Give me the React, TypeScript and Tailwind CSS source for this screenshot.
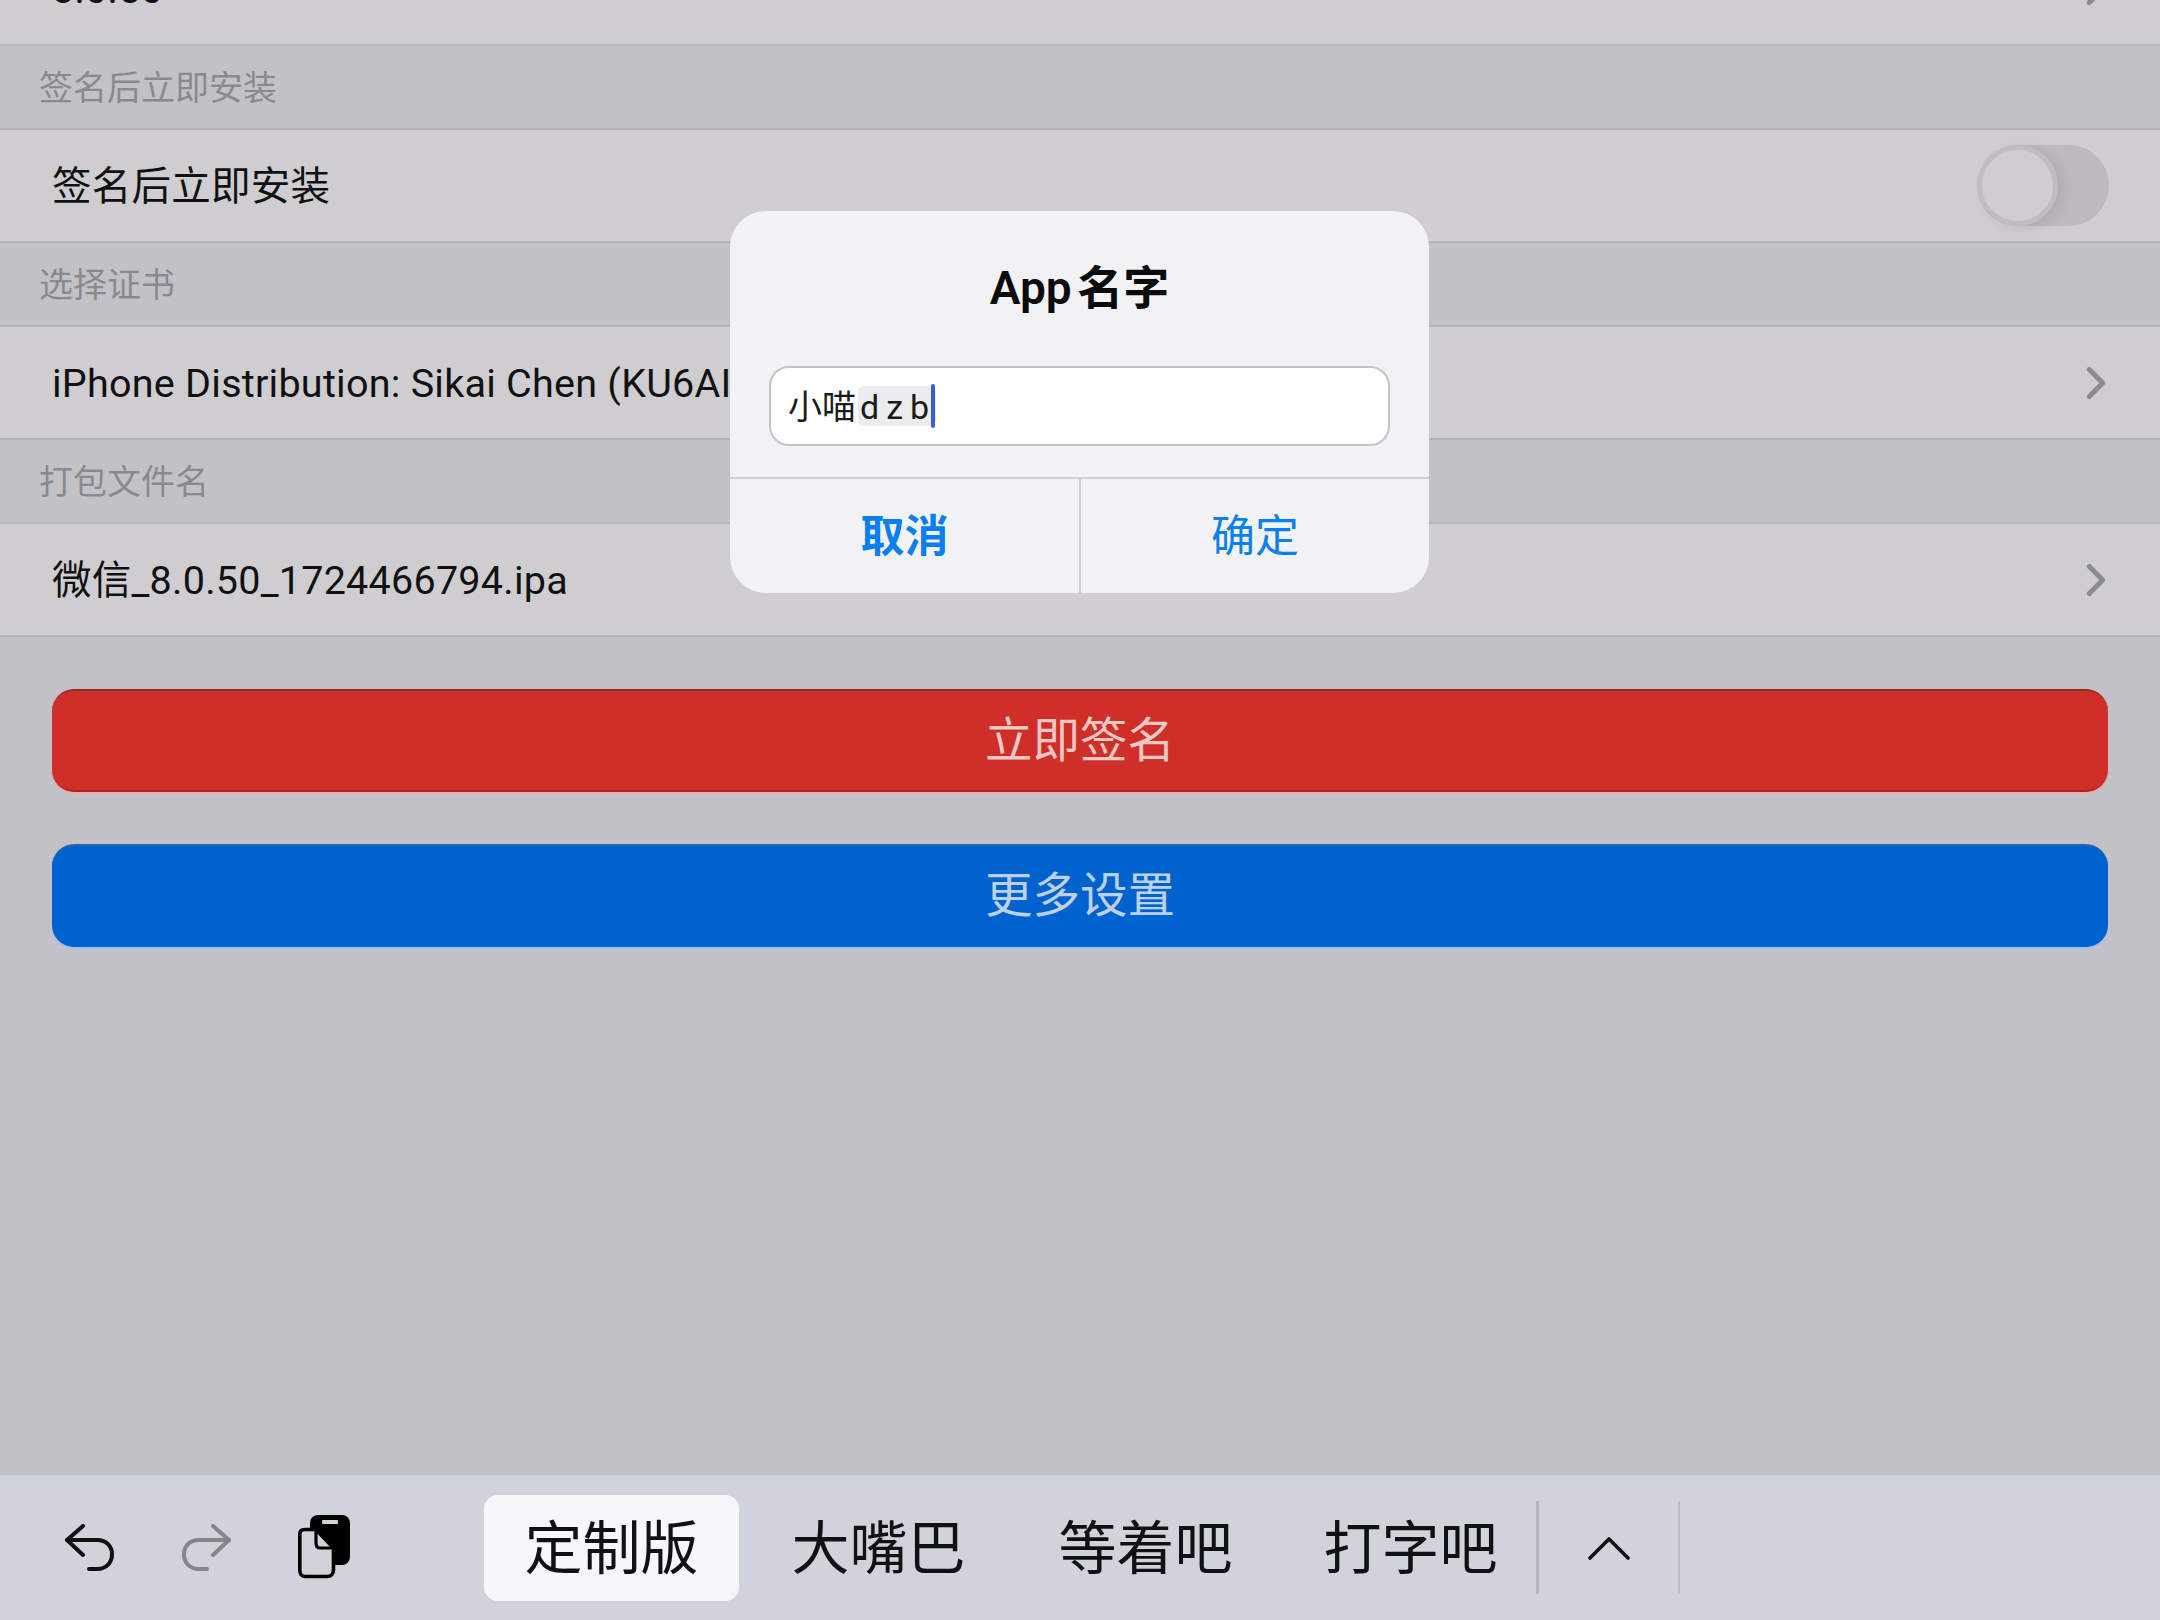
import React from 'react';
import { ChevronRight } from 'lucide-react';

const FONT = 'font-["Roboto","Noto_Sans_CJK_SC",sans-serif]';

const Header = ({ title }: { title: string }) => (
  <div className="h-[84px] flex items-center pl-[39px] pt-[2px] text-[34px] text-[#8a898f] bg-[#c2c1c7] border-b-2 border-[#b5b4ba]">
    {title}
  </div>
);

const Row = ({ text, arrow = true, children }: { text: string; arrow?: boolean; children?: React.ReactNode }) => (
  <div className="h-[113px] flex items-center justify-between pl-[52px] pr-[52px] bg-[#cfcdd0] border-b-2 border-[#b5b4ba] text-[39.5px] tracking-[0.25px] text-[#111113]">
    <span className="whitespace-nowrap pt-[3px]">{text}</span>
    {arrow && <ChevronRight size={54} strokeWidth={2.2} className="text-[#8b8a8f] mr-[-15px]" />}
    {children}
  </div>
);

const UndoIcon = ({ color }: { color: string }) => (
  <svg width="50" height="48" viewBox="0 0 50 48" fill="none" stroke={color} strokeWidth="4" strokeLinecap="round" strokeLinejoin="round">
    <path d="M18 2 L2 16 L18 31" />
    <path d="M2 16 H32 C42 16 47 23 47 30 C47 39 41 45 32 45 H24" />
  </svg>
);

const PasteIcon = () => (
  <svg width="54" height="64" viewBox="0 0 54 64" fill="none">
    <rect x="12" y="0" width="40" height="50" rx="8" fill="#000" />
    <rect x="24" y="5" width="16" height="4" rx="1" fill="#d1d3da" />
    <path d="M7 14.5 H18 L35.5 33 V55 C35.5 59 33 61.5 29 61.5 H7 C3.5 61.5 1.8 59 1.8 55 V19 C1.8 16 3.5 14.5 7 14.5 Z" fill="#d1d3da" stroke="#000" strokeWidth="3.6" strokeLinejoin="round" />
    <path d="M18 15 V28 C18 31 19 33 22 33 H35" stroke="#000" strokeWidth="3.2" />
  </svg>
);

export default function App() {
  return (
    <div className={`${FONT} relative w-[2160px] h-[1620px] overflow-hidden bg-[#c2c1c7] flex flex-col`}>
      <div className="flex-1 min-h-0">
        <div className="mt-[-67px]">
          <Row text="8.0.50" />
          <Header title="签名后立即安装" />
          <Row text="签名后立即安装" arrow={false}>
            <div className="relative w-[132px] h-[81px] rounded-full bg-[#bcbabd] mr-[-1px]">
              <div className="absolute left-0 top-0 w-[81px] h-[81px] rounded-full border-[5px] border-[#bfbdc0] bg-[#cfcdd0] shadow-[6px_3px_12px_rgba(0,0,0,0.08)]" />
            </div>
          </Row>
          <Header title="选择证书" />
          <Row text="iPhone Distribution: Sikai Chen (KU6AI" />
          <Header title="打包文件名" />
          <Row text="微信_8.0.50_1724466794.ipa" />
        </div>

        <div className="px-[52px] pt-[52px] flex flex-col gap-[52px]">
          <div className="h-[103px] pt-[2px] rounded-[22px] bg-[#d02f29] border-t-2 border-b-2 border-t-[#8f2a28] border-b-[#a82723] shadow-[0_2px_0_#eeaaa6] flex items-center justify-center text-[47.5px] text-[#efc8c4]">
            立即签名
          </div>
          <div className="h-[103px] pt-[1px] rounded-[22px] bg-[#0062cf] border-t-2 border-t-[#2a66ac] shadow-[0_2px_0_#8fc4f5] flex items-center justify-center text-[47.5px] text-[#bcd0e8]">
            更多设置
          </div>
        </div>
      </div>

      {/* keyboard shortcut bar */}
      <div className="h-[145px] shrink-0 bg-[#d1d3da] flex items-center pl-[65px]">
        <UndoIcon color="#111" />
        <div className="ml-[66px]">
          <div className="scale-x-[-1]"><UndoIcon color="#85868b" /></div>
        </div>
        <div className="ml-[67px] mb-[2px]"><PasteIcon /></div>
        <div className="ml-[132px] mt-[1px] flex gap-[12px] text-[58px] text-[#111113]">
          <div className="w-[255px] h-[106px] pt-[2px] rounded-[14px] bg-[#f7f7fb] flex items-center justify-center">定制版</div>
          <div className="w-[255px] h-[106px] pt-[2px] flex items-center justify-center">大嘴巴</div>
          <div className="w-[255px] h-[106px] pt-[2px] flex items-center justify-center">等着吧</div>
          <div className="w-[251px] h-[106px] pt-[2px] flex items-center justify-center">打字吧</div>
        </div>
        <div className="w-[3px] h-[93px] bg-[#b4b6bd]" />
        <div className="w-[139px] flex justify-center">
          <svg width="42" height="24" viewBox="0 0 42 24" fill="none" stroke="#111" strokeWidth="3.6" strokeLinecap="round" strokeLinejoin="round">
            <path d="M2 22 L21 3 L40 22" />
          </svg>
        </div>
        <div className="w-[2px] h-[93px] bg-[#bcbec5]" />
      </div>

      {/* alert dialog */}
      <div className="absolute left-[730px] top-[211px] w-[699px] h-[382px] rounded-[36px] bg-[#f2f2f5] flex flex-col overflow-hidden">
        <div className="h-[155px] shrink-0 flex items-center justify-center text-[46px] font-semibold text-[#0b0b0d] [word-spacing:-6px]">
          App 名字
        </div>
        <div className="mx-[39px] h-[80px] shrink-0 rounded-[20px] bg-white border-2 border-[#c4c4c8] flex items-center pl-[17px] text-[34px] text-[#1a1a1c]">
          <span className="pt-[2px]">小喵</span>
          <span className="ml-[2px] pt-[2px] tracking-[7px] bg-[#ececee] rounded-[6px] h-[40px] flex items-center pl-[2px]">dzb</span>
          <span className="relative z-10 w-[4px] h-[44px] bg-[#3a5fd0] rounded-full ml-[-5px]" />
        </div>
        <div className="mt-[31px] flex-1 flex border-t-2 border-[#d0d0d4] text-[44px] text-[#0a7ff0]">
          <div className="w-[351px] pt-[2px] flex items-center justify-center font-bold border-r-2 border-[#d0d0d4]">取消</div>
          <div className="flex-1 pt-[2px] flex items-center justify-center">确定</div>
        </div>
      </div>
    </div>
  );
}
